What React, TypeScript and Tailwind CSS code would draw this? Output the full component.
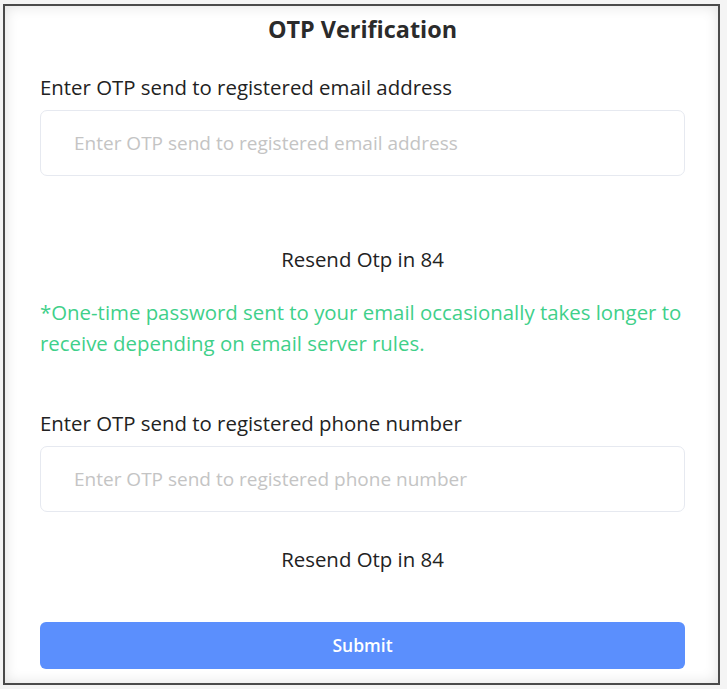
import React from "react";

export default function App() {
  return (
    <div className="w-[727px] h-[689px] bg-[#f4f4f4] pt-[4px] pl-[3px]" style={{ fontFamily: '"Open Sans", sans-serif' }}>
      <div className="w-[717px] h-[681px] border-2 border-[#4a4a4a] bg-white shadow-[inset_0_0_14px_rgba(0,0,0,0.12)] flex flex-col pl-[35px] pr-[33px]">
        <h1 className="text-center text-[23.4px] font-bold text-[#2b2b2b] mt-[8px] leading-[30px]">OTP Verification</h1>
        <label className="mt-[29px] text-[20.4px] leading-[28px] text-[#222]">Enter OTP send to registered email address</label>
        <div className="mt-[9px] h-[66px] rounded-[7px] border border-[#e6e9f0] bg-white flex items-center px-[33px] text-[19px] text-[#c4c4c4]">
          Enter OTP send to registered email address
        </div>
        <div className="mt-[69px] text-center text-[20.4px] leading-[28px] text-[#222]">Resend Otp in 84</div>
        <p className="mt-[24px] text-[20.4px] leading-[31px] text-[#3fd08a]">
          *One-time password sent to your email occasionally takes longer to receive depending on email server rules.
        </p>
        <label className="mt-[50px] text-[20.4px] leading-[28px] text-[#222]">Enter OTP send to registered phone number</label>
        <div className="mt-[9px] h-[66px] rounded-[7px] border border-[#e6e9f0] bg-white flex items-center px-[33px] text-[19px] text-[#c4c4c4]">
          Enter OTP send to registered phone number
        </div>
        <div className="mt-[33px] text-center text-[20.4px] leading-[28px] text-[#222]">Resend Otp in 84</div>
        <button className="mt-[49px] h-[47px] rounded-[6px] bg-[#5b8ffd] text-white text-[17.5px] font-semibold">Submit</button>
      </div>
    </div>
  );
}
